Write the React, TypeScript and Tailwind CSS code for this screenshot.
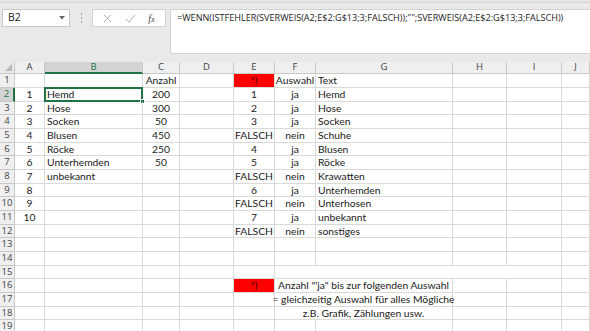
import React from "react";

type Row = { a?: string; b?: string; c?: string; e?: string; f?: string; g?: string; redE?: boolean; merge?: string; emptyRow15?: boolean };

const rows: Row[] = [
  { c: "Anzahl", e: "*)", redE: true, f: "Auswahl", g: "Text" },
  { a: "1", b: "Hemd", c: "200", e: "1", f: "ja", g: "Hemd" },
  { a: "2", b: "Hose", c: "300", e: "2", f: "ja", g: "Hose" },
  { a: "3", b: "Socken", c: "50", e: "3", f: "ja", g: "Socken" },
  { a: "4", b: "Blusen", c: "450", e: "FALSCH", f: "nein", g: "Schuhe" },
  { a: "5", b: "Röcke", c: "250", e: "4", f: "ja", g: "Blusen" },
  { a: "6", b: "Unterhemden", c: "50", e: "5", f: "ja", g: "Röcke" },
  { a: "7", b: "unbekannt", e: "FALSCH", f: "nein", g: "Krawatten" },
  { a: "8", e: "6", f: "ja", g: "Unterhemden" },
  { a: "9", e: "FALSCH", f: "nein", g: "Unterhosen" },
  { a: "10", e: "7", f: "ja", g: "unbekannt" },
  { e: "FALSCH", f: "nein", g: "sonstiges" },
  {},
  {},
  { emptyRow15: true },
  { e: "*)", redE: true, merge: 'Anzahl "\'ja" bis zur folgenden Auswahl' },
  { merge: "= gleichzeitig Auswahl für alles Mögliche" },
  { merge: "z.B. Grafik, Zählungen usw." },
  {},
];

const cols = ["A", "B", "C", "D", "E", "F", "G", "H", "I", "J"];

const cellFont = { fontFamily: "Lato, 'Open Sans', sans-serif" };
const uiFont = { fontFamily: "'Open Sans', 'Noto Sans', sans-serif" };

const base = "border-r border-b border-[#dadada] flex items-center text-[10.3px] leading-none text-[#1a1a1a] whitespace-nowrap overflow-visible";

export default function App() {
  return (
    <div className="w-[590px] h-[331px] overflow-hidden bg-[#e9e9e9] flex flex-col" style={uiFont}>
      {/* toolbar */}
      <div className="h-[62px] shrink-0 flex flex-col">
        <div className="h-[3px] border-b border-[#d2d2d2] bg-[#e6e6e6]" />
        <div className="flex items-start pl-[2px] pt-[6px]">
          <div className="shrink-0 w-[68px] h-[18px] bg-white border border-[#c9c9c9] flex items-center justify-between pl-[5px] pr-[4px]">
            <span className="text-[10.5px] text-[#222]">B2</span>
            <svg width="6" height="4" viewBox="0 0 6 4"><path d="M0 0 L6 0 L3 3.5 Z" fill="#666" /></svg>
          </div>
          <div className="shrink-0 w-[22px] h-[18px] flex flex-col items-center justify-center gap-[2px]">
            <div className="w-[1px] h-[2px] bg-[#a8a8a8]" />
            <div className="w-[1px] h-[2px] bg-[#a8a8a8]" />
            <div className="w-[1px] h-[2px] bg-[#a8a8a8]" />
          </div>
          <div className="shrink-0 w-[74px] h-[18px] bg-white border border-[#d2d2d2] flex items-center justify-around px-[4px]">
            <svg width="9" height="9" viewBox="0 0 9 9"><path d="M1 1 L8 8 M8 1 L1 8" stroke="#b0b0b0" strokeWidth="1" /></svg>
            <svg width="11" height="9" viewBox="0 0 11 9"><path d="M1 5 L4 8 L10 1" stroke="#b0b0b0" strokeWidth="1" fill="none" /></svg>
            <span className="text-[10px] italic text-[#444]" style={{ fontFamily: "'Liberation Serif', serif" }}>f<span className="text-[8px]">x</span></span>
          </div>
          <div className="ml-[4px] flex-1 min-w-0 overflow-hidden h-[45px] bg-white border border-[#d2d2d2] border-r-0 pl-[6px] pt-[1px] text-[9.1px] leading-[14px] text-[#222] whitespace-nowrap">
            =WENN(ISTFEHLER(SVERWEIS(A2;E$2:G$13;3;FALSCH));"";SVERWEIS(A2;E$2:G$13;3;FALSCH))
          </div>
        </div>
      </div>

      {/* sheet */}
      <div className="grid grid-cols-[15px_30px_98px_37px_54px_41px_41px_137px_54px_55px_1fr] bg-white">
        {/* header row */}
        <div className="h-[12px] bg-[#e9e9e9] border-r border-b border-[#c8c8c8] relative">
          <svg className="absolute right-[2px] bottom-[2px]" width="7" height="7" viewBox="0 0 7 7"><path d="M7 0 L7 7 L0 7 Z" fill="#b8b8b8" /></svg>
        </div>
        {cols.map((c) => (
          <div
            key={c}
            className={
              c === "B"
                ? "h-[12px] bg-[#d3d3d3] border-r border-[#c8c8c8] border-b-2 border-b-[#217346] flex items-center justify-center text-[9.5px] text-[#217346]"
                : "h-[12px] bg-[#efefef] border-r border-b border-[#c8c8c8] flex items-center justify-center text-[9.5px] text-[#444]"
            }
          >
            {c}
          </div>
        ))}

        {rows.map((r, i) => {
          const h = i % 3 === 2 ? "h-[13px]" : "h-[14px]";
          const n = i + 1;
          const sel = n === 2;
          return (
            <React.Fragment key={n}>
              <div
                className={
                  sel
                    ? `${h} bg-[#d3d3d3] border-b border-[#c8c8c8] border-r-2 border-r-[#217346] flex items-center justify-center text-[9.5px] text-[#217346]`
                    : `${h} bg-[#efefef] border-r border-b border-[#c8c8c8] flex items-center justify-center text-[9.5px] text-[#444]`
                }
              >
                {n}
              </div>
              <div className={`${h} ${base} justify-center`} style={cellFont}>{r.a}</div>
              <div className={`${h} ${base} pl-[2px] relative`} style={cellFont}>
                {r.b}
                {sel && (
                  <div className="absolute left-[-1px] top-[-1px] right-[-1px] bottom-[-1px] border-2 border-[#217346]">
                    <div className="absolute right-[-4px] bottom-[-4px] w-[5px] h-[5px] bg-[#217346] border border-white" />
                  </div>
                )}
              </div>
              <div className={`${h} ${base} justify-center`} style={cellFont}>{r.c}</div>
              <div className={`${h} ${base}`} />
              <div
                className={`${h} ${base} justify-center ${r.redE ? "bg-[#ff0000] text-[#3a0000]" : ""}`}
                style={cellFont}
              >
                {r.e}
              </div>
              {r.merge !== undefined ? (
                <div className={`${h} ${base} col-span-2 justify-center`} style={cellFont}>{r.merge}</div>
              ) : r.emptyRow15 ? (
                <>
                  <div className={`${h} border-b border-[#dadada]`} />
                  <div className={`${h} border-b border-[#dadada]`} />
                </>
              ) : (
                <>
                  <div className={`${h} ${base} justify-center`} style={cellFont}>{r.f}</div>
                  <div className={`${h} ${base} pl-[2px]`} style={cellFont}>{r.g}</div>
                </>
              )}
              <div className={`${h} ${r.emptyRow15 ? "border-b border-[#dadada]" : base}`} />
              <div className={`${h} ${base}`} />
              <div className={`${h} ${base}`} />
            </React.Fragment>
          );
        })}
      </div>
    </div>
  );
}
